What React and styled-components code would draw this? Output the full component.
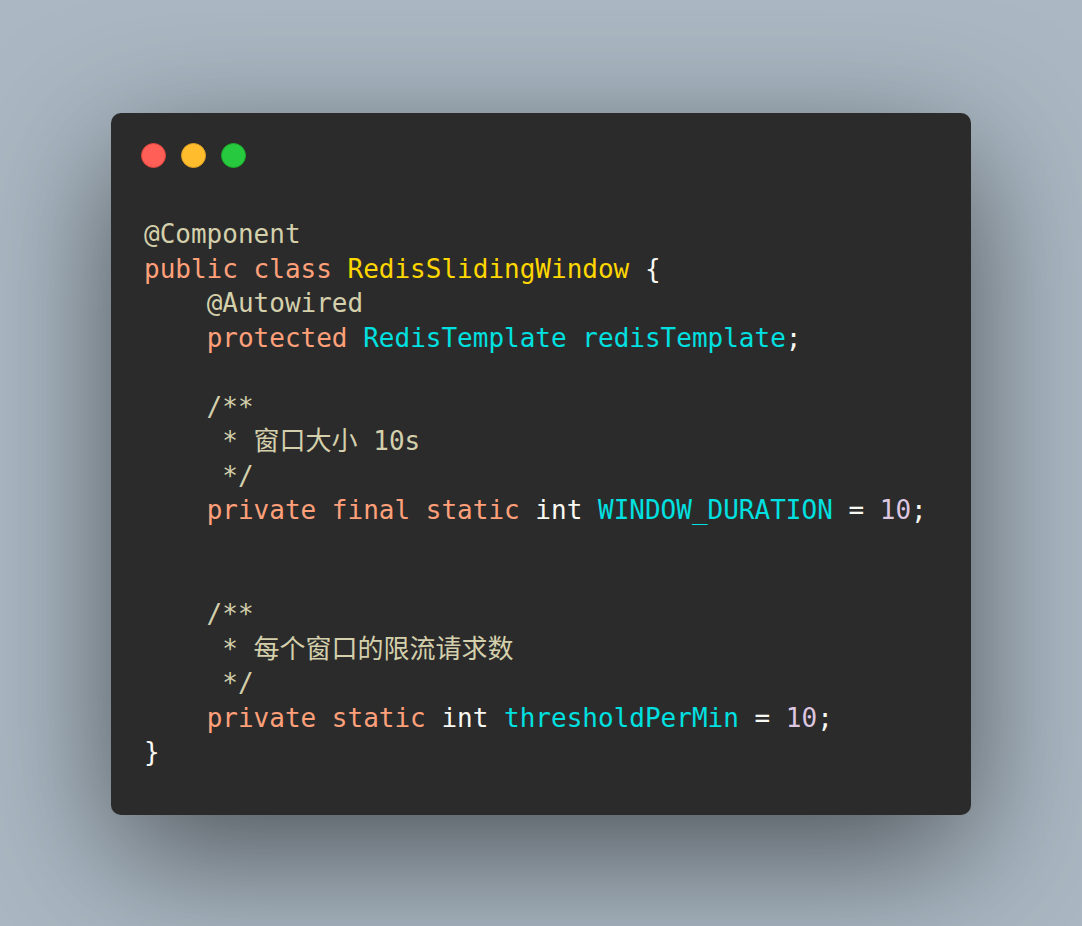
import React from "react";
import styled, { createGlobalStyle } from "styled-components";

const GlobalStyle = createGlobalStyle`
  html, body {
    margin: 0;
    padding: 0;
    background: #abb8c3;
  }
`;

const colors = {
  anno: "#d4d0ab",
  comment: "#d4d0ab",
  kw: "#ffa07a",
  cls: "#ffd700",
  type: "#00e0e0",
  plain: "#f8f8f2",
  num: "#dcc6e0",
};

const code = [
  [["anno", "@Component"]],
  [["kw", "public class "], ["cls", "RedisSlidingWindow"], ["plain", " {"]],
  [["plain", "    "], ["anno", "@Autowired"]],
  [
    ["plain", "    "],
    ["kw", "protected "],
    ["type", "RedisTemplate redisTemplate"],
    ["plain", ";"],
  ],
  [],
  [["comment", "    /**"]],
  [["comment", "     * 窗口大小 10s"]],
  [["comment", "     */"]],
  [
    ["plain", "    "],
    ["kw", "private final static "],
    ["plain", "int "],
    ["type", "WINDOW_DURATION"],
    ["plain", " = "],
    ["num", "10"],
    ["plain", ";"],
  ],
  [],
  [],
  [["comment", "    /**"]],
  [["comment", "     * 每个窗口的限流请求数"]],
  [["comment", "     */"]],
  [
    ["plain", "    "],
    ["kw", "private static "],
    ["plain", "int "],
    ["type", "thresholdPerMin"],
    ["plain", " = "],
    ["num", "10"],
    ["plain", ";"],
  ],
  [["plain", "}"]],
];

const App = () => {
  return (
    <Page>
      <GlobalStyle />
      <Window>
        <Controls>
          <Dot $color="#ff5f56" $edge="#e0443e" />
          <Dot $color="#ffbd2e" $edge="#dea123" />
          <Dot $color="#27c93f" $edge="#1aab29" />
        </Controls>
        <Code>
          {code.map((line, i) => (
            <Line key={i}>
              {line.length === 0
                ? " "
                : line.map(([kind, text], j) => (
                    <Token key={j} $kind={kind}>
                      {text}
                    </Token>
                  ))}
            </Line>
          ))}
        </Code>
      </Window>
    </Page>
  );
};

export default App;

const Page = styled.div`
  width: 1082px;
  height: 926px;
  box-sizing: border-box;
  padding: 113px 111px 0 111px;
  background: #abb8c3;
`;

const Window = styled.div`
  width: 860px;
  height: 702px;
  box-sizing: border-box;
  background: #2b2b2b;
  border-radius: 10px;
  box-shadow: rgba(0, 0, 0, 0.55) 0 40px 136px;
  padding: 30px 33px 0 30px;
`;

const Controls = styled.div`
  display: flex;
  gap: 15px;
  height: 25px;
`;

const Dot = styled.span`
  width: 25px;
  height: 25px;
  border-radius: 50%;
  box-sizing: border-box;
  background: ${(p) => p.$color};
  border: 1px solid ${(p) => p.$edge};
`;

const Code = styled.pre`
  margin: 49px 0 0 3px;
  font-family: "DejaVu Sans Mono", "Noto Sans CJK SC", monospace;
  font-size: 26px;
  line-height: 34.55px;
  color: ${colors.plain};
`;

const Line = styled.div`
  height: 34.55px;
  white-space: pre;
`;

const Token = styled.span`
  color: ${(p) => colors[p.$kind]};
`;
